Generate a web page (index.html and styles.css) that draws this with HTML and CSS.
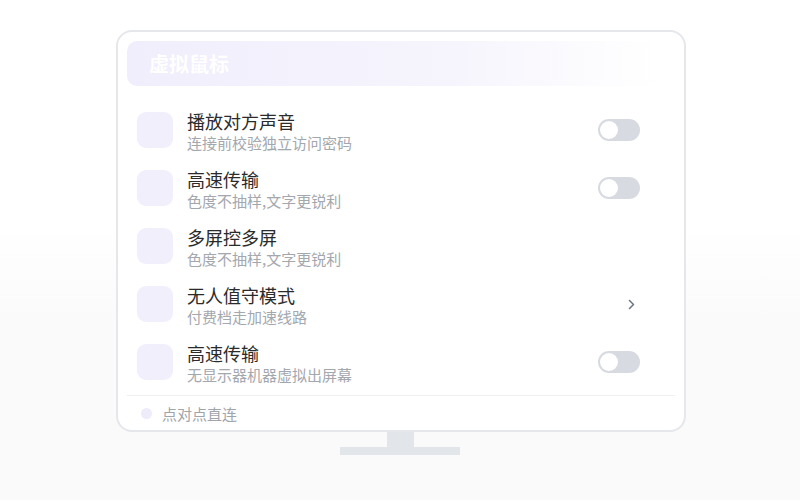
FILE: index.html
```html
<!DOCTYPE html>
<html lang="zh">
<head>
<meta charset="utf-8">
<title>虚拟鼠标</title>
<link rel="stylesheet" href="styles.css">
</head>
<body>
<div class="page">
  <div class="monitor">
    <div class="header">虚拟鼠标</div>
    <div class="list">
      <div class="row">
        <div class="icon"></div>
        <div class="text">
          <div class="title">播放对方声音</div>
          <div class="sub">连接前校验独立访问密码</div>
        </div>
        <div class="action"><span class="toggle"><span class="knob"></span></span></div>
      </div>
      <div class="row">
        <div class="icon"></div>
        <div class="text">
          <div class="title">高速传输</div>
          <div class="sub">色度不抽样,文字更锐利</div>
        </div>
        <div class="action"><span class="toggle"><span class="knob"></span></span></div>
      </div>
      <div class="row">
        <div class="icon"></div>
        <div class="text">
          <div class="title">多屏控多屏</div>
          <div class="sub">色度不抽样,文字更锐利</div>
        </div>
        <div class="action"></div>
      </div>
      <div class="row">
        <div class="icon"></div>
        <div class="text">
          <div class="title">无人值守模式</div>
          <div class="sub">付费档走加速线路</div>
        </div>
        <div class="action chev">
          <svg width="7" height="11" viewBox="0 0 7 11"><polyline points="1.5,1.5 5.5,5.5 1.5,9.5" fill="none" stroke="#6b7280" stroke-width="1.5" stroke-linecap="round" stroke-linejoin="round"/></svg>
        </div>
      </div>
      <div class="row">
        <div class="icon"></div>
        <div class="text">
          <div class="title">高速传输</div>
          <div class="sub">无显示器机器虚拟出屏幕</div>
        </div>
        <div class="action"><span class="toggle"><span class="knob"></span></span></div>
      </div>
    </div>
    <div class="divider"></div>
    <div class="footer"><span class="dot"></span><span class="ftext">点对点直连</span></div>
  </div>
  <div class="neck"></div>
  <div class="base"></div>
</div>
</body>
</html>
```

FILE: styles.css
```css
* { box-sizing: border-box; }
html, body { margin: 0; padding: 0; background: #ffffff; }
body { font-family: "Noto Sans CJK SC", "Noto Sans", sans-serif; }
.page {
  width: 800px;
  height: 500px;
  padding-top: 30px;
  display: flex;
  flex-direction: column;
  align-items: center;
  background: linear-gradient(180deg, #ffffff 0%, #ffffff 45%, #fafafb 65%, #fafafb 100%);
}
.monitor {
  width: 570px;
  margin-left: 2px;
  border: 2px solid #e5e7eb;
  border-radius: 16px;
  padding: 9px 9px 0;
  display: flex;
  flex-direction: column;
  background: #fff;
}
.header {
  height: 45px;
  border-radius: 10px;
  background: linear-gradient(90deg, #f0eefc 0%, #f6f5fd 60%, #ffffff 97%);
  color: #ffffff;
  font-weight: 700;
  font-size: 20px;
  line-height: 45px;
  padding-left: 22px;
}
.list {
  margin-top: 15px;
  display: flex;
  flex-direction: column;
}
.row {
  height: 58px;
  display: flex;
  align-items: center;
  padding-left: 10px;
  padding-right: 35px;
}
.icon {
  width: 36px;
  height: 36px;
  border-radius: 9px;
  background: #f1effc;
  flex: none;
}
.text {
  flex: 1;
  margin-left: 14px;
  padding-top: 1px;
}
.title {
  font-size: 18px;
  line-height: 24px;
  color: #2b2b2b;
}
.sub {
  font-size: 15px;
  line-height: 20px;
  color: #a3a7ae;
}
.action {
  width: 42px;
  height: 22px;
  display: flex;
  align-items: center;
  flex: none;
}
.chev {
  justify-content: flex-end;
  padding-right: 5px;
}
.toggle {
  width: 42px;
  height: 22px;
  border-radius: 11px;
  background: #d7dae0;
  padding: 2px;
  display: flex;
}
.knob {
  width: 18px;
  height: 18px;
  border-radius: 50%;
  background: #ffffff;
}
.divider {
  margin-top: 4px;
  height: 1px;
  background: #eeeff2;
}
.footer {
  height: 34px;
  display: flex;
  align-items: center;
  padding-left: 14px;
}
.dot {
  width: 11px;
  height: 11px;
  border-radius: 50%;
  background: #eeebfb;
}
.ftext {
  margin-left: 10px;
  font-size: 15px;
  color: #a0a4ab;
}
.neck {
  width: 27px;
  height: 15px;
  margin-left: 1px;
  background: #e2e5e9;
}
.base {
  width: 120px;
  height: 8px;
  background: #e2e5e9;
}
```
